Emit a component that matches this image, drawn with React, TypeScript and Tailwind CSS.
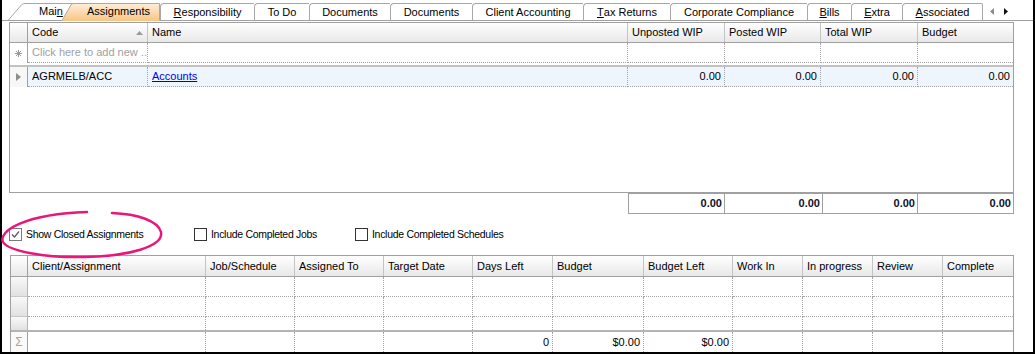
import React from "react";

const FONT = "font-['Liberation_Sans',Arial,sans-serif]";
const TOP_COLS = "grid grid-cols-[18px_120px_480px_97px_96px_97px_95px]";
const BOT_COLS =
  "grid grid-cols-[17px_178px_89px_89px_89px_80px_91px_89px_70px_70px_70px_70px]";

const tabs: { w: string; last?: boolean; node: React.ReactNode }[] = [
  { w: "w-[94px]", node: (<><u>R</u>esponsibility</>) },
  { w: "w-[55px]", node: <>To Do</> },
  { w: "w-[81px]", node: <>Documents</> },
  { w: "w-[82px]", node: <>Documents</> },
  { w: "w-[111px]", node: <>Client Accounting</> },
  { w: "w-[87px]", node: (<><u>T</u>ax Returns</>) },
  { w: "w-[137px]", node: <>Corporate Compliance</> },
  { w: "w-[44px]", node: (<><u>B</u>ills</>) },
  { w: "w-[51px]", node: (<><u>E</u>xtra</>) },
  { w: "w-[81px]", last: true, node: (<><u>A</u>ssociated</>) },
];

function HCell({ children, last }: { children?: React.ReactNode; last?: boolean }) {
  return (
    <div
      className={`flex items-center pl-[4px] overflow-hidden whitespace-nowrap ${
        last ? "" : "border-r border-[#c4c4c4]"
      }`}
    >
      {children}
    </div>
  );
}

function DCell({
  children,
  right,
  last,
  bottom = true,
}: {
  children?: React.ReactNode;
  right?: boolean;
  last?: boolean;
  bottom?: boolean;
}) {
  return (
    <div
      className={`flex items-center overflow-hidden whitespace-nowrap border-dotted border-[#a4a4a4] ${
        last ? "" : "border-r"
      } ${bottom ? "border-b" : ""} ${right ? "justify-end pr-[3px]" : "pl-[4px]"}`}
    >
      {children}
    </div>
  );
}

function Selector({ children, white }: { children?: React.ReactNode; white?: boolean }) {
  return (
    <div
      className={`flex items-center justify-center border-r border-[#a0a0a0] ${
        white ? "bg-white" : "bg-[#f7f7f7]"
      }`}
    >
      {children}
    </div>
  );
}

function RowButton({ h, noBorder }: { h: string; noBorder?: boolean }) {
  return (
    <div
      className={`${h} bg-linear-to-b from-[#f9f9f9] to-[#e1e1e1] border-r border-[#b4b4b4] ${
        noBorder ? "" : "border-b border-b-[#c8c8c8]"
      }`}
    />
  );
}

function Checkbox({ checked }: { checked?: boolean }) {
  return (
    <div
      className={`w-[13px] h-[13px] shrink-0 border bg-white flex items-center justify-center ${
        checked ? "border-[#7a7a7a]" : "border-[#333333]"
      }`}
    >
      {checked && (
        <svg width="9" height="9" viewBox="0 0 9 9">
          <path d="M1 4.5 L3.5 7 L8 1.5" fill="none" stroke="#5a5a5a" strokeWidth="1.2" />
        </svg>
      )}
    </div>
  );
}

export default function App() {
  const topHeaders = ["Unposted WIP", "Posted WIP", "Total WIP", "Budget"];
  const botHeaders = [
    "Client/Assignment",
    "Job/Schedule",
    "Assigned To",
    "Target Date",
    "Days Left",
    "Budget",
    "Budget Left",
    "Work In",
    "In progress",
    "Review",
    "Complete",
  ];
  const footer = ["", "", "", "", "0", "$0.00", "$0.00", "", "", "", ""];

  return (
    <div
      className={`${FONT} relative w-[1035px] h-[354px] bg-white border-l-2 border-r-2 border-b-2 border-black text-[11px] text-black`}
    >
      {/* Tab strip */}
      <div className="flex items-end h-[21px] border-b border-[#a0a0a0]">
        <div className="relative flex items-end w-[158px] h-full shrink-0">
          <svg className="absolute inset-0" width="158" height="21" viewBox="0 0 158 21">
            <defs>
              <linearGradient id="act" x1="0" y1="0" x2="0" y2="1">
                <stop offset="0" stopColor="#fdeedb" />
                <stop offset="1" stopColor="#f9c581" />
              </linearGradient>
            </defs>
            <path d="M6 20.5 L19.5 4.8 Q21 3.5 23 3.5 L75 3.5" fill="none" stroke="#a8a8a8" strokeWidth="1" />
            <path d="M60 21 L69 4.8 Q70 3.5 72 3.5 L157.5 3.5 L157.5 21 Z" fill="url(#act)" />
            <path d="M60 20.5 L69 4.8 Q70 3.5 72 3.5 L157.5 3.5 L157.5 20" fill="none" stroke="#a8a8a8" strokeWidth="1" />
          </svg>
          <span className="relative w-[60px] pl-[37px] h-[17px] leading-[17px]">
            Mai<u>n</u>
          </span>
          <span className="relative pl-[25px] h-[17px] leading-[17px]">Assignments</span>
        </div>
        {tabs.map((t, i) => (
          <div
            key={i}
            className={`${t.w} h-[17px] shrink-0 flex items-center justify-center whitespace-nowrap border-l border-t border-[#a8a8a8] rounded-tl-[4px] ${
              t.last ? "border-r rounded-tr-[2px]" : ""
            }`}
          >
            {t.node}
          </div>
        ))}
        <div className="flex items-center h-[17px] pl-[7px] gap-[10px]">
          <svg width="4" height="7" viewBox="0 0 4 7">
            <polygon points="4,0 0,3.5 4,7" fill="#8c8c8c" />
          </svg>
          <svg width="4" height="7" viewBox="0 0 4 7">
            <polygon points="0,0 4,3.5 0,7" fill="#111" />
          </svg>
        </div>
      </div>
      <div className="h-[1px]" />

      {/* Top grid */}
      <div className="ml-[7px] w-[1005px] h-[171px] border border-[#a0a0a0] bg-white overflow-hidden">
        <div
          className={`${TOP_COLS} h-[20px] border-b border-[#a0a0a0] bg-linear-to-b from-white to-[#e8e8e8]`}
        >
          <div className="border-r border-[#a0a0a0]" />
          <div className="flex items-center justify-between pl-[4px] pr-[4px] border-r border-[#c4c4c4]">
            <span>Code</span>
            <svg width="7" height="4" viewBox="0 0 7 4">
              <polygon points="0,4 3.5,0 7,4" fill="#9a9a9a" />
            </svg>
          </div>
          <HCell>Name</HCell>
          {topHeaders.map((h, i) => (
            <HCell key={h} last={i === topHeaders.length - 1}>
              {h}
            </HCell>
          ))}
        </div>
        {/* new row */}
        <div className={`${TOP_COLS} h-[20px]`}>
          <Selector white>
            <svg width="7" height="7" viewBox="0 0 7 7">
              <g stroke="#9a9a9a" strokeWidth="1">
                <line x1="3.5" y1="0" x2="3.5" y2="7" />
                <line x1="0" y1="3.5" x2="7" y2="3.5" />
                <line x1="1" y1="1" x2="6" y2="6" />
                <line x1="6" y1="1" x2="1" y2="6" />
              </g>
            </svg>
          </Selector>
          <DCell>
            <span className="text-[#a0a0a0]">Click here to add new ..</span>
          </DCell>
          <DCell />
          <DCell />
          <DCell />
          <DCell />
          <DCell last />
        </div>
        <div className="h-[2px]" />
        <div className="h-[2px] bg-[#c2c2c2]" />
        {/* data row */}
        <div className={`${TOP_COLS} h-[20px]`}>
          <Selector>
            <svg width="5" height="8" viewBox="0 0 5 8">
              <polygon points="0,0 5,4 0,8" fill="#8e8e8e" />
            </svg>
          </Selector>
          <div className="bg-[#eef5fd] flex items-center pl-[4px] border-r border-b border-dotted border-[#a4a4a4]">
            AGRMELB/ACC
          </div>
          <div className="bg-[#eef5fd] flex items-center pl-[4px] border-r border-b border-dotted border-[#a4a4a4]">
            <span className="text-[#0000ee] underline">Accounts</span>
          </div>
          <div className="bg-[#eef5fd] flex items-center justify-end pr-[3px] border-r border-b border-dotted border-[#a4a4a4]">
            0.00
          </div>
          <div className="bg-[#eef5fd] flex items-center justify-end pr-[3px] border-r border-b border-dotted border-[#a4a4a4]">
            0.00
          </div>
          <div className="bg-[#eef5fd] flex items-center justify-end pr-[3px] border-r border-b border-dotted border-[#a4a4a4]">
            0.00
          </div>
          <div className="bg-[#eef5fd] flex items-center justify-end pr-[3px] border-b border-dotted border-[#a4a4a4]">
            0.00
          </div>
        </div>
      </div>

      {/* Totals */}
      <div className="ml-[626px] w-[386px] h-[21px] flex border border-[#a0a0a0] font-bold text-[#10102a]">
        <div className="w-[96px] flex items-center justify-end pr-[2px] border-r border-[#a0a0a0]">0.00</div>
        <div className="w-[98px] flex items-center justify-end pr-[2px] border-r border-[#a0a0a0]">0.00</div>
        <div className="w-[95px] flex items-center justify-end pr-[2px] border-r border-[#a0a0a0]">0.00</div>
        <div className="flex-1 flex items-center justify-end pr-[2px]">0.00</div>
      </div>

      {/* Checkboxes */}
      <div className="h-[41px] flex items-center pl-[7px] text-[10.5px] tracking-[-0.3px]">
        <div className="w-[185px] flex items-center gap-[4px]">
          <Checkbox checked />
          <span>Show Closed Assignments</span>
        </div>
        <div className="w-[161px] flex items-center gap-[4px]">
          <Checkbox />
          <span>Include Completed Jobs</span>
        </div>
        <div className="flex items-center gap-[4px]">
          <Checkbox />
          <span>Include Completed Schedules</span>
        </div>
      </div>

      {/* Bottom grid */}
      <div className="ml-[8px] w-[1004px] h-[97px] border-l border-t border-r border-[#a0a0a0] overflow-hidden">
        <div
          className={`${BOT_COLS} h-[21px] border-b border-[#a0a0a0] bg-linear-to-b from-white to-[#e8e8e8]`}
        >
          <div className="border-r border-[#a0a0a0]" />
          {botHeaders.map((h, i) => (
            <HCell key={i} last={i === botHeaders.length - 1}>
              {h}
            </HCell>
          ))}
        </div>
        {[0, 1].map((r) => (
          <div key={r} className={`${BOT_COLS} h-[20px]`}>
            <RowButton h="h-[20px]" />
            {botHeaders.map((_, i) => (
              <DCell key={i} last={i === botHeaders.length - 1} />
            ))}
          </div>
        ))}
        <div className={`${BOT_COLS} h-[13px]`}>
          <RowButton h="h-[13px]" noBorder />
          {botHeaders.map((_, i) => (
            <DCell key={i} last={i === botHeaders.length - 1} bottom={false} />
          ))}
        </div>
        <div className="h-[2px] bg-[#b4b4b4]" />
        <div className={`${BOT_COLS} h-[20px]`}>
          <div className="flex items-center justify-center border-r border-[#a0a0a0] bg-[#fafafa] text-[#a6a6a6] text-[12px]">
            Σ
          </div>
          {footer.map((v, i) => (
            <DCell key={i} right={v !== ""} last={i === footer.length - 1} bottom={false}>
              {v}
            </DCell>
          ))}
        </div>
      </div>

      {/* Pink hand-drawn highlight */}
      <svg
        className="absolute left-[-2px] top-0 pointer-events-none"
        width="200"
        height="354"
        viewBox="0 0 200 354"
      >
        <path
          d="M112 213 C138 214 158 221 161 232 C164 247 128 256 85 257 C45 258 8 251 3 242 C-2 231 25 214 87 212"
          fill="none"
          stroke="#e8177c"
          strokeWidth="2.5"
          strokeLinecap="round"
        />
      </svg>
    </div>
  );
}
